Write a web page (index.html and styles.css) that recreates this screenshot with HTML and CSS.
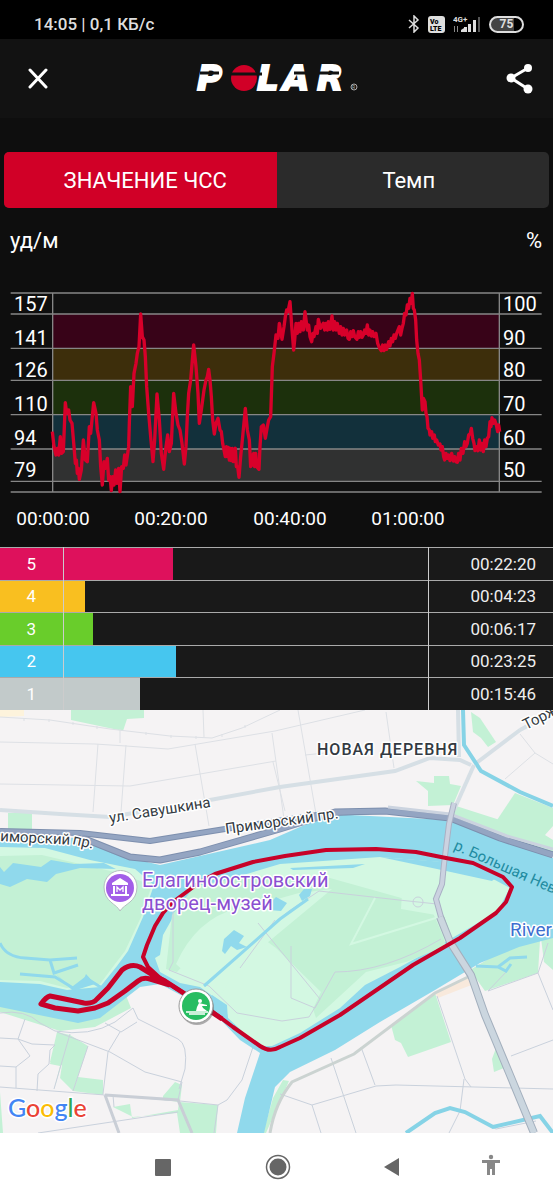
FILE: index.html
```html
<!DOCTYPE html>
<html lang="ru">
<head>
    <meta charset="UTF-8">
    <meta name="viewport" content="width=device-width, initial-scale=1.0">
    <title>Polar</title>
    <link rel="stylesheet" href="styles.css">
</head>
<body>
    <div class="status-bar">
        <span class="clock">14:05 | 0,1 КБ/с</span>
        <div class="status-icons">
            <svg width="12" height="18" viewBox="0 0 12 18" fill="none" stroke="#dedede" stroke-width="1.5"><path d="M1 5l9 8-4 4V1l4 4-9 8"/></svg>
            <svg width="17" height="17" viewBox="0 0 17 17">
                <rect width="17" height="17" rx="3" fill="#dedede"/>
                <text x="2" y="8" class="volte">Vo</text>
                <text x="2" y="15" class="volte">LTE</text>
            </svg>
            <svg width="28" height="18" viewBox="0 0 28 18" fill="#dedede">
                <text x="0" y="7" class="net">4G+</text>
                <path d="M1 11h1v6h-1zM4 11h1v6h-1z" fill="#888"/>
                <path d="M8 17v-2l3-2v4zM11 12h3v5h-3zM15 9h3v8h-3zM20 5h3v12h-3z"/>
                <path d="M25 2h2v15h-2z" fill="#555"/>
            </svg>
            <span class="battery">75</span>
        </div>
    </div>

    <header class="header">
        <button class="icon-btn" aria-label="Закрыть">
            <svg width="22" height="22" viewBox="0 0 22 22" stroke="#fff" stroke-width="3" stroke-linecap="round"><path d="M3 2l16 17M19 2L3 19"/></svg>
        </button>
        <svg class="logo" width="164" height="50" viewBox="0 -10 164 50" role="img" aria-label="Polar">
            <g class="logo-text">
                <text x="1" y="26">P</text>
                <text x="61 87 121" y="26">LAR</text>
            </g>
            <circle cx="48" cy="14" r="13" fill="#d10027"/>
            <path d="M4 9h19M34 10h32M98 9h18M123 9h20" stroke="#121212" stroke-width="3"/>
            <circle cx="158" cy="23" r="3" fill="none" stroke="#aaa"/>
            <text x="156" y="25" class="reg">R</text>
        </svg>
        <button class="icon-btn" aria-label="Поделиться">
            <svg width="28" height="30" viewBox="0 0 28 30" fill="#fff"><path d="M22 4L5 14l17 11" fill="none" stroke="#fff" stroke-width="3"/><circle cx="22" cy="4" r="4"/><circle cx="5" cy="14" r="4.5"/><circle cx="22" cy="25" r="4.5"/></svg>
        </button>
    </header>

    <div class="tabs">
        <button class="tab active">ЗНАЧЕНИЕ ЧСС</button>
        <button class="tab">Темп</button>
    </div>

    <div class="units">
        <span>уд/м</span>
        <span>%</span>
    </div>

    <svg class="chart" viewBox="0 0 553 267">
        <g transform="scale(.33333)">
            <path fill="#111" d="M158 39h1340v597H158z"/>
            <path fill="#380318" d="M158 102h1340v103H158z"/>
            <path fill="#3d2e0b" d="M158 205h1340v96H158z"/>
            <path fill="#1c300c" d="M158 301h1340v103H158z"/>
            <path fill="#12303b" d="M158 404h1340v103H158z"/>
            <path fill="#303131" d="M158 507h1340v97H158z"/>
            <path class="grid" d="M32 39H1625M32 102H1625M32 205H1625M32 301H1625M32 404H1625M32 507H1625M32 604H1625M32 636H1625M158 39V636M1498 39V636"/>
            <polyline class="pulse" points="157,455 162,500 168,525 172,505 176,525 181,470 185,520 190,515 196,368 200,400 206,390 210,420 216,430 222,500 226,550 229,540 232,580 235,565 238,598 244,570 250,480 256,540 262,545 268,440 272,460 281,368 288,400 292,450 298,480 302,560 307,615 312,545 316,565 322,535 326,600 330,590 334,632 338,590 342,615 347,570 351,610 356,565 360,635 365,560 370,565 374,525 378,555 386,500 388,430 392,320 397,380 402,280 408,250 412,220 417,200 422,102 427,170 432,180 436,230 440,320 446,400 452,470 459,545 464,480 471,342 478,420 484,520 491,568 498,500 503,465 508,515 514,490 521,340 528,400 534,435 540,450 546,490 553,552 558,500 562,410 566,340 572,300 581,195 588,260 594,340 598,430 604,390 612,330 618,300 622,290 626,268 630,300 634,350 638,420 643,462 648,430 654,415 660,450 664,455 668,490 676,530 679,500 682,530 685,502 688,540 691,505 694,542 697,505 700,545 703,515 706,505 709,560 713,560 717,592 722,530 728,470 736,385 742,450 748,480 752,560 755,525 758,555 761,520 764,560 767,520 770,560 777,568 780,500 784,440 790,435 796,475 802,440 806,420 812,410 817,260 822,220 828,165 834,175 838,130 846,178 852,140 856,110 860,90 864,95 870,65 876,150 881,210 884,180 888,130 892,160 896,130 900,155 904,125 910,150 915,95 922,150 926,135 930,170 935,185 939,160 942,170 948,140 952,160 955,118 962,145 970,130 974,150 978,130 982,150 985,125 990,148 996,108 1000,150 1004,125 1008,150 1012,130 1018,160 1022,140 1026,165 1030,145 1034,165 1040,150 1044,175 1048,178 1052,155 1056,170 1060,152 1064,170 1071,178 1075,155 1078,172 1082,155 1086,172 1090,165 1094,150 1098,160 1102,135 1106,165 1110,150 1114,168 1118,155 1122,170 1128,160 1133,190 1139,205 1144,212 1148,195 1152,212 1156,195 1160,208 1166,185 1170,198 1174,175 1178,185 1182,165 1186,175 1190,160 1198,140 1202,165 1206,145 1210,130 1214,100 1218,105 1222,75 1226,85 1230,55 1234,70 1237,40 1240,85 1243,90 1247,120 1250,180 1254,220 1258,240 1262,300 1267,390 1270,355 1275,365 1278,400 1281,410 1284,445 1288,450 1290,465 1295,455 1298,475 1303,465 1306,485 1310,480 1315,495 1320,492 1323,510 1327,500 1331,530 1334,540 1338,520 1342,535 1346,525 1350,542 1355,520 1360,543 1364,530 1368,545 1372,547 1376,520 1380,540 1384,505 1389,520 1394,485 1398,500 1402,490 1406,465 1411,460 1414,445 1418,475 1422,490 1425,512 1430,500 1434,512 1438,480 1442,510 1446,490 1450,515 1454,480 1458,500 1462,475 1466,470 1470,425 1473,440 1476,413 1480,430 1484,420 1489,435 1493,455 1496,435 1499,455"/>
        </g>
        <g class="axis">
            <text x="14" y="31">157</text>
            <text x="14" y="65">141</text>
            <text x="14" y="97">126</text>
            <text x="14" y="131">110</text>
            <text x="14" y="165">94</text>
            <text x="14" y="197">79</text>
            <text x="503" y="31">100</text>
            <text x="503" y="65">90</text>
            <text x="503" y="97">80</text>
            <text x="503" y="131">70</text>
            <text x="503" y="165">60</text>
            <text x="503" y="197">50</text>
        </g>
        <g class="axis times">
            <text x="53" y="245">00:00:00</text>
            <text x="171" y="245">00:20:00</text>
            <text x="290" y="245">00:40:00</text>
            <text x="408" y="245">01:00:00</text>
        </g>
    </svg>

    <table class="zones">
        <tr class="z5"><th scope="row">5</th><td class="track"><div class="bar" style="width: 30%"></div></td><td class="time">00:22:20</td></tr>
        <tr class="z4"><th scope="row">4</th><td class="track"><div class="bar" style="width: 6%"></div></td><td class="time">00:04:23</td></tr>
        <tr class="z3"><th scope="row">3</th><td class="track"><div class="bar" style="width: 8%"></div></td><td class="time">00:06:17</td></tr>
        <tr class="z2"><th scope="row">2</th><td class="track"><div class="bar" style="width: 31%"></div></td><td class="time">00:23:25</td></tr>
        <tr class="z1"><th scope="row">1</th><td class="track"><div class="bar" style="width: 21%"></div></td><td class="time">00:15:46</td></tr>
    </table>

    <svg class="map" viewBox="0 710 553 423" preserveAspectRatio="xMidYMid slice">
        <rect y="710" width="553" height="423" fill="#f5f3f4"/>

        <!-- parks on the mainland -->
        <g fill="#c3f1d5">
            <path d="M71 710h73v8l-17 1-4 12-52-11zM8 813h24v22l-24-4zM471 712l9 6 16 24-8 5-7-9-8-6zM416 781l18 2v-7h15l1 8 11 2-8 19-25 1v-15zM515 793l38 15v18l-8 9 8 5v10l-60-24zM453 805l50 16 50 21v12l-100-38z"/>
            <path d="M0 1004L78 1021 125 993 131 1008 95 1027 60 1031 0 1012zM57 1032L70 1035 54 1090 60 1066 50 1064zM70 1035L88 1046 73 1091 60 1078 62 1065 50 1062 57 1032zM78 1077L103 1080 103 1095 73 1091z"/>
            <path d="M113 1107l17-3 2 14 46-8 1-8 39 3-2 28h-36l-3-20-44 4zM163 1096l12-14 7 3-2 17-17-2z"/>
            <path d="M391 1025l44-32 16 49-43 15-7-14-6-3zM470 970l30-18 40-12-2 33-53 18zM540 930h13v40l-9-8zM496 1048l8 20-10 4-2-13z"/>
            <path d="M0 1092l3 41h-3zM273 1098l10-18 6 1-23 52h-3z"/>
        </g>
        <path fill="#fdf3dc" d="M0 710h24v6l-24 1z"/>
        <path fill="#f8e9dc" d="M435 993l35-18 4 9-36 14z"/>

        <!-- small streets -->
        <g class="street">
            <path d="M0 717l50 3 60 9 60 7 42 2 30-10 38-18M0 742l95 2 31 2 42 3 107-18 90-21M0 784l130 2 70-12 76-13M98 744l-5 68M126 745l-5 67M195 744l14 82M272 733l12 86M203 710l1 27M120 729v14M298 710l18 104M386 712l8 56M305 755l20-2M273 762l12 49M520 734l15 19-30 26M535 753l18 11"/>
            <path d="M24 718v3M49 719v3M73 722v3M97 726v3M146 732v3M171 735v3M196 736v3M222 734v3M245 725v3"/>
        </g>
        <g class="street dark">
            <path d="M0 1013q25-4 40 10l15 8q35 6 60-9l18-14 5 11 40 20q10 5 7 30l-6 20M25 1019l-7 20 14 5 23 1-5 5-1 14-11 10-1 17M0 1038l18 1 12 17-14 11-16-1M16 1067v21M57 1032l53 20 35 20 37 10-4 18M120 1032l-12 20-5 42M105 1023l16 9 16-10M70 1034l-16 55M88 1046l-15 45M0 1087l105 8 75 6 38 4 9-5 15-20 20-60M218 1105l-4 28M38 1133l140-21M113 1095l1 12M508 970l-20 21 50-18 15 37M538 973l10-30M553 1040l-42 16"/>
            <path d="M280 1094l32 11 64-19 20-1 157 4M312 1105l9 28M331 1058l25 75M361 1047l14 38M437 996l28 83 6 8M464 1079l-4 32-11 22M470 1115l26 14 40-8"/>
        </g>
        <path class="avenue" d="M0 810l60 4 50 3 100-17 70-13 115-16 35-13 30 2 11 5M458 710l1 47M520 730l-45 34 M553 712l-33 18"/>
        <path d="M105 1095l73 5 14 33M105 1095l14 38" fill="none" stroke="#c9ced6" stroke-width="3"/>

        <!-- water -->
        <path fill="#90d9ec" d="M0 836L80 838 130 858 160 865 270 840 330 814 450 820 553 858V938L519 947 480 963 435 990 380 1022 335 1050 290 1072 275 1087 264 1133H237L245 1098 260 1053 240 1040 215 1014 190 1000 160 984 140 987 100 1018 78 1023 0 1007z"/>
        <path class="stream" d="M463 710l1 35 17 26 39 21 33 14M406 1133l29-20 15-5 15 4 28 15 47-11 13 17"/>

        <!-- west island -->
        <path fill="#d3f8e2" d="M0 847L45 848 90 860 135 869 154 885 143 917 128 951 117 966 100 987 67 990 40 984 0 982z"/>
        <path fill="#c3f1d5" d="M0 856L42 855 80 864 115 872 152 885 141 917 125 951 115 964 100 984 67 988 40 981 0 980z"/>
        <path fill="#90d9ec" d="M0 867l4 5 9-9 28 4 10-7 23 4 30-1 12 6-36-1-24 6-9 8-20-3-17 8-10-3z"/>
        <path d="M0 943q6 14 25 15l25 2 27-2M50 960l4 13 24-8M20 974l35 3 18 11 13-10 16 10" fill="none" stroke="#90d9ec" stroke-width="3"/>
        <path fill="#90d9ec" d="M56 974l17 15 10-8 3-7 9 10-22 7z"/>

        <!-- Elagin island -->
        <path fill="#d3f8e2" d="M176 912L163 935 160 955 155 958 160 972 180 983 200 987 225 1005 228 1018 258 1046 272 1046 300 1033 340 1008 365 985 400 967 440 945 497 912 510 888 495 880 450 868 440 862 380 857 280 864 220 882 190 898z"/>
        <path fill="#c3f1d5" d="M172 915l23-29 55-10 80 2 100 28 13 30 3 10-40 16-40 10-50 46-3-9 8-17-45-44-36-26-35 20-28 30-11-3z"/>
        <path fill="#d3f8e2" d="M274 900l25-7 33-4-65 54-27 20-20 33-20-10-24-22q20-45 62-56zM403 877l40 4-8 18 1 16-35-6z"/>
        <path d="M173 905l0 57-4 8 20 8 20 8 28 27 45 8 27-4 11-18-45-55-17-21M291 946l0 52 24 10M315 1008l20-36q50 0 106-33M204 985l85-74 30-20 80 9 38 4M240 968l35-48" class="street dark"/>
        <circle cx="418" cy="902" r="5" class="street dark"/>
        <path d="M375 898l-24 46 88-27" fill="none" stroke="#d3f8e2" stroke-width="2"/>
        <path d="M204 986l76-67 28-20" fill="none" stroke="#90d9ec" stroke-width="3"/>
        <path fill="#90d9ec" d="M224 939l10-9 10 6-5 7 8 4-10 3-6-4-6 8-3-3zM270 903l6-6 11 6-6 8-12-1zM299 895l5-6h8l-2 7-8 5zM290 868l75-4-12 4-60 2zM380 857l64 5 51 16-3 3-55-12zM212 995l15 10 1 15-14-8z"/>
        <path d="M476 966l22 1 12-9 17-1M498 967l8 4 5-7" fill="none" stroke="#90d9ec" stroke-width="3"/>

        <!-- embankment and bridges -->
        <path d="M270 1133q5-30 22-51l62-28 81-61 35-17" fill="none" stroke="#cbd3d1" stroke-width="3"/>
        <g class="highway-edge">
            <path d="M0 831l80 2 70 8 75-12 105-16 50-2"/>
            <path d="M80 837l50 20 30 3 40-8 80-23 55-17 50-1 65 7 50 20 53 17" class="wide"/>
        </g>
        <g class="highway">
            <path d="M0 831l80 2 70 8 75-12 105-16 50-2"/>
            <path d="M80 837l50 20 30 3 40-8 80-23 55-17 50-1 65 7 50 20 53 17" class="wide"/>
        </g>
        <path d="M388 807l62 7 57 22 46 13" fill="none" stroke="#cbd3df" stroke-width="3"/>
        <path d="M474 765l-20 45" class="avenue"/>
        <path d="M454 803l-5 21-5 40-2 20-6 15 5 18 9 25 21 35" fill="none" stroke="#a9b0c4" stroke-width="6"/>
        <path d="M454 803l-5 21-5 40-2 20-6 15 5 18 9 25 21 35" fill="none" stroke="#cbd2e0" stroke-width="4"/>
        <path d="M440 917l10 25 21 33 14 40 25 60 24 58" fill="none" stroke="#a3afbd" stroke-width="8"/>
        <path d="M440 917l10 25 21 33 14 40 25 60 24 58" fill="none" stroke="#cbd6df" stroke-width="6"/>

        <!-- labels -->
        <g class="label">
            <text x="317" y="755" class="district">НОВАЯ ДЕРЕВНЯ</text>
            <text transform="translate(110 823) rotate(-9)">ул. Савушкина</text>
            <text transform="translate(0 841) rotate(3)">иморский</text>
            <text transform="translate(72 844) rotate(13)">пр.</text>
            <text transform="translate(226 834) rotate(-8)">Приморский пр.</text>
            <text transform="translate(526 730) rotate(-27)">Торж</text>
        </g>
        <text class="river" transform="translate(453 849) rotate(24)">р. Большая Нев</text>
        <text class="place" x="510" y="936">River</text>

        <!-- workout track -->
        <g class="route">
            <path d="M182 992L160 978 148 967 143 957 147 945 155 926 163 913 173 902 200 882 215 874 253 862 285 856 326 850 376 849 416 852 446 858 473 863 503 877 512 887 506 902 496 913 460 938 413 965 340 1015 300 1038 280 1047Q270 1053 260 1046L233 1027 213 1012z"/>
            <path class="thick" d="M222 1019L182 992 165 981 153 975 140 967Q131 963 122 970L108 988 97 999Q93 1004 84 1003L60 998 50 996Q46 997 41 1004L55 1008 78 1011 95 1008 108 1003 125 991 138 981Q143 977 150 979L170 985"/>
        </g>

        <g class="museum">
            <text x="142" y="887">Елагиноостровский</text>
            <text x="142" y="910">дворец-музей</text>
        </g>
        <path d="M120 911c-3-7-16-9-16-24a16 16 0 0 1 33 0c0 15-13 17-17 24z" fill="#fff" stroke="#b5bfc0"/>
        <circle cx="120" cy="888" r="14" fill="#a35ee8"/>
        <path d="M120 878l-8 5v2h16v-2zM113 886h2v8h-2zM125 886h2v8h-2zM111 894h18v2h-18z" fill="#fff"/>
        <path d="M117 892v-5l3 3 3-3v5" fill="none" stroke="#fff" stroke-width="1.3"/>

        <circle cx="197" cy="1008" r="17" fill="#555" opacity=".45"/>
        <circle cx="196" cy="1006" r="17" fill="#fff" stroke="#999"/>
        <circle cx="196" cy="1006" r="14" fill="#28bd62"/>
        <circle cx="200" cy="1001" r="2" fill="#fff"/>
        <path d="M199 1003l8 2v1h-5l1 2 4 3h-11l1-4z" fill="#fff"/>
        <path d="M186 1012h22M189 1014h16" fill="none" stroke="#fff" stroke-width="1.5"/>

        <text class="google" x="8" y="1117"><tspan fill="#4285f4">G</tspan><tspan fill="#ea4335">o</tspan><tspan fill="#fbbc05">o</tspan><tspan fill="#4285f4">g</tspan><tspan fill="#34a853">l</tspan><tspan fill="#ea4335">e</tspan></text>
    </svg>

    <nav class="nav-bar">
        <span></span>
        <button aria-label="Недавние"><svg width="26" height="26" viewBox="0 0 26 26"><rect x="5" y="5" width="16" height="17" rx="1" fill="#666"/></svg></button>
        <button aria-label="Домой"><svg width="26" height="26" viewBox="0 0 26 26" fill="none"><circle cx="13" cy="13" r="11.5" stroke="#666" stroke-width="1.5"/><circle cx="13" cy="13" r="8.5" fill="#666"/></svg></button>
        <button aria-label="Назад"><svg width="26" height="26" viewBox="0 0 26 26" fill="#666"><path d="M20 4v18L5 13z"/></svg></button>
        <button aria-label="Специальные возможности"><svg width="26" height="26" viewBox="0 0 26 26" fill="#888"><circle cx="13" cy="3" r="2.2"/><path d="M4 6h18v3h-5v12h-3v-6h-2v6H9V9H4z"/></svg></button>
    </nav>
</body>
</html>
```

FILE: styles.css
```css
* {
    box-sizing: border-box;
}

body {
    margin: 0;
    min-height: 100vh;
    display: flex;
    flex-direction: column;
    background-color: #0e0e0e;
    color: #fff;
    font-family: Roboto, "Liberation Sans", sans-serif;
}

button {
    border: 0;
    padding: 0;
    background: none;
    color: inherit;
    font-family: inherit;
    cursor: pointer;
}

svg {
    display: block;
}

.status-bar {
    display: flex;
    justify-content: space-between;
    align-items: center;
    height: 39px;
    padding: 9px 29px 0 34px;
    background-color: #000;
    color: #dedede;
}

.clock {
    font-size: 17px;
    font-weight: 500;
}

.status-icons {
    display: flex;
    align-items: center;
    gap: 8px;
}

.volte {
    font-size: 7px;
    font-weight: 900;
    fill: #000;
}

.net {
    font-size: 8px;
    font-weight: 700;
}

.battery {
    width: 35px;
    height: 17px;
    border: 2px solid #dedede;
    border-radius: 9px;
    background: linear-gradient(90deg, #444 75%, #000 75%);
    font-size: 12px;
    font-weight: 700;
    line-height: 13px;
    text-align: center;
}

.header {
    display: flex;
    justify-content: space-between;
    align-items: center;
    height: 79px;
    padding: 0 19px 0 27px;
    background-color: #121212;
}

.logo-text {
    font-family: "DejaVu Sans", sans-serif;
    font-size: 34px;
    font-weight: 700;
    font-style: italic;
    fill: #fff;
    stroke: #fff;
    stroke-width: 2;
}

.reg {
    font-size: 5px;
    fill: #aaa;
}

.tabs {
    display: flex;
    height: 56px;
    margin: 34px 4px 0;
    border-radius: 5px;
    overflow: hidden;
    background-color: #2b2b2b;
}

.tab {
    width: 50%;
    padding-right: 8px;
    font-size: 22px;
}

.tab.active {
    padding: 0 0 0 10px;
    background-color: #d10027;
}

.units {
    display: flex;
    justify-content: space-between;
    padding: 20px 11px 0 10px;
    font-size: 22px;
    line-height: 25px;
}

.chart {
    width: 100%;
    margin-top: 27px;
}

.grid {
    stroke: #868686;
    stroke-width: 4;
}

.pulse {
    fill: none;
    stroke: #d8002a;
    stroke-width: 10;
    stroke-linejoin: round;
}

.axis {
    font-size: 20px;
    fill: #fff;
}

.times {
    font-size: 19px;
    text-anchor: middle;
}

.zones {
    width: 100%;
    height: 163px;
    border-collapse: collapse;
    table-layout: fixed;
    background-color: #191919;
    font-size: 17px;
}

.zones tr {
    border-top: 1px solid #aaa;
}

.zones th,
.zones td {
    height: 31px;
    padding: 0;
}

.zones th {
    width: 63px;
    border-right: 1px solid #ccc;
    font-weight: 400;
}

.zones .time {
    width: 125px;
    padding-right: 17px;
    border-left: 1px solid #ccc;
    text-align: right;
    color: #eee;
}

.bar {
    height: 100%;
}

.z5 th, .z5 .bar { background-color: #de115c; }
.z4 th, .z4 .bar { background-color: #f9bf20; }
.z3 th, .z3 .bar { background-color: #69cd2b; }
.z2 th, .z2 .bar { background-color: #46c6ef; }
.z1 th, .z1 .bar { background-color: #c2caca; }

.map {
    flex: 1;
    width: 100%;
    min-height: 423px;
}

.street {
    fill: none;
    stroke: #dde0e5;
    stroke-width: 1;
}

.street.dark {
    stroke: #c9d1dc;
}

.avenue {
    fill: none;
    stroke: #d6dfe5;
    stroke-width: 4;
}

.stream {
    fill: none;
    stroke: #86d3e6;
    stroke-width: 4;
}

.highway,
.highway-edge {
    fill: none;
    stroke: #94a5c2;
    stroke-width: 4;
    stroke-linejoin: round;
}

.highway .wide {
    stroke-width: 5;
}

.highway-edge {
    stroke: #7d8fae;
    stroke-width: 6;
}

.highway-edge .wide {
    stroke-width: 7;
}

.label text,
.place,
.museum text,
.google {
    paint-order: stroke;
    stroke: #fff;
    stroke-width: 3;
    stroke-linejoin: round;
}

.label {
    font-size: 15px;
    fill: #333a42;
}

.label .district {
    font-size: 16px;
    font-weight: 500;
    letter-spacing: 1px;
}

.river {
    font-size: 15px;
    fill: #218ba0;
}

.place {
    font-size: 19px;
    fill: #3d6fd0;
}

.museum {
    font-size: 20px;
    fill: #8a4fd0;
}

.route {
    fill: none;
    stroke: #c70229;
    stroke-width: 4;
    stroke-linejoin: round;
}

.route .thick {
    stroke-width: 5;
}

.google {
    font-family: Lato, sans-serif;
    font-size: 25px;
    font-weight: 500;
}

.nav-bar {
    display: grid;
    grid-template-columns: 105fr 115fr 115fr 113fr 86fr 19fr;
    justify-items: center;
    align-items: center;
    height: 67px;
    background-color: #fff;
}
```
